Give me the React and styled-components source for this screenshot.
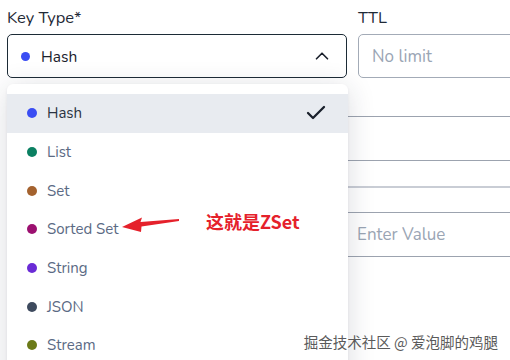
import React from 'react';
import styled, { createGlobalStyle } from 'styled-components';
import { Check, ChevronUp } from 'lucide-react';

const Global = createGlobalStyle`
  html, body { margin: 0; padding: 0; background: #fff; }
  body { font-family: Nunito, Lato, "Noto Sans", sans-serif; }
`;

const Page = styled.div`
  position: relative;
  width: 510px;
  height: 360px;
  overflow: hidden;
  box-sizing: border-box;
  padding: 8px 0 0 7px;
`;

const TopRow = styled.div`
  display: grid;
  grid-template-columns: 340px 220px;
  column-gap: 11px;
  width: 571px;
`;

const Field = styled.div`
  position: relative;
  display: flex;
  flex-direction: column;
  gap: 6px;
`;

const Label = styled.label`
  font-size: 16.5px;
  line-height: 20px;
  color: #1f2a37;
`;

const SelectBox = styled.div`
  height: 44px;
  box-sizing: border-box;
  border: 1px solid ${p => (p.$active ? '#1c2b36' : '#a3abb7')};
  border-radius: 5px;
  display: flex;
  align-items: center;
  padding: 0 13px;
  gap: 11px;
  font-size: ${p => (p.$placeholder ? '17px' : '15.5px')};
  color: ${p => (p.$placeholder ? '#9aa5b4' : '#1a202c')};
`;

const EndIcon = styled.span`
  margin-left: auto;
  display: flex;
  align-items: center;
`;

const Dot = styled.span`
  width: ${p => p.$size || 9}px;
  height: ${p => p.$size || 9}px;
  border-radius: 50%;
  background: ${p => p.$color};
  flex: none;
`;

const Menu = styled.ul`
  position: absolute;
  top: calc(100% + 6px);
  left: 0;
  width: 341px;
  height: 320px;
  margin: 0;
  padding: 10px 0 0;
  list-style: none;
  background: #fff;
  border-radius: 6px;
  box-shadow: 0 4px 28px rgba(30, 40, 60, 0.16), 0 1px 3px rgba(30, 40, 60, 0.06);
  z-index: 5;
`;

const Item = styled.li`
  height: 38.67px;
  display: flex;
  align-items: center;
  gap: 10px;
  padding: 0 20px 0 20px;
  font-size: 15px;
  background: ${p => (p.$selected ? '#e8ebf0' : 'transparent')};
  color: ${p => (p.$selected ? '#2a3342' : '#5b6a84')};
`;

const BackRows = styled.div`
  display: grid;
  grid-template-columns: 328px 220px;
  column-gap: 8px;
  margin-top: 38px;
  width: 556px;
`;

const Stack = styled.div`
  display: flex;
  flex-direction: column;
`;

const Box = styled.div`
  height: 45px;
  box-sizing: border-box;
  border: 1px solid #9ca3af;
  border-radius: 4px;
  display: flex;
  align-items: center;
  padding: 0 13px;
  font-size: 17px;
  color: #9aa5b4;
  margin-top: ${p => p.$gap || 0}px;
`;

const Divider = styled.div`
  height: 2px;
  background: #c9cdd5;
  margin-top: 25px;
`;

const Annotation = styled.div`
  position: absolute;
  left: 121px;
  top: 208px;
  display: flex;
  align-items: flex-start;
  gap: 25px;
  z-index: 6;
`;

const Arrow = styled.svg`
  margin-top: 6px;
  flex: none;
`;

const Note = styled.span`
  font-family: "Noto Sans CJK SC", sans-serif;
  font-weight: 700;
  font-size: 18px;
  line-height: 24px;
  color: #e5212b;
  margin-top: 1px;
`;

const Watermark = styled.div`
  position: absolute;
  right: 12px;
  bottom: 8px;
  font-family: "Noto Sans CJK SC", sans-serif;
  font-size: 14.5px;
  line-height: 20px;
  color: #5a5a5a;
  text-shadow: 0 0 2px #fff, 0 0 2px #fff;
  z-index: 7;
`;

const types = [
  { name: 'Hash', color: '#3a4df3' },
  { name: 'List', color: '#0b8062' },
  { name: 'Set', color: '#a4622e' },
  { name: 'Sorted Set', color: '#9c1070' },
  { name: 'String', color: '#6a2bd6' },
  { name: 'JSON', color: '#3e4a5e' },
  { name: 'Stream', color: '#6b7a18' },
];

export default function App() {
  return (
    <>
      <Global />
      <Page>
        <TopRow>
          <Field>
            <Label>Key Type*</Label>
            <SelectBox $active>
              <Dot $color="#3a4df3" />
              <span>Hash</span>
              <EndIcon>
                <ChevronUp size={22} strokeWidth={1.8} color="#1a202c" />
              </EndIcon>
            </SelectBox>
            <Menu>
              {types.map((t, i) => (
                <Item key={t.name} $selected={i === 0}>
                  <Dot $color={t.color} $size={10} />
                  <span>{t.name}</span>
                  {i === 0 && (
                    <EndIcon>
                      <Check size={24} strokeWidth={2.3} color="#1a202c" />
                    </EndIcon>
                  )}
                </Item>
              ))}
            </Menu>
          </Field>
          <Field>
            <Label>TTL</Label>
            <SelectBox $placeholder>No limit</SelectBox>
          </Field>
        </TopRow>
        <BackRows>
          {[0, 1].map(c => (
            <Stack key={c}>
              <Box />
              <Divider />
              <Box $gap={24}>{c === 1 ? 'Enter Value' : null}</Box>
            </Stack>
          ))}
        </BackRows>
        <Annotation>
          <Arrow width="60" height="20" viewBox="0 0 60 20">
            <polygon points="1,13 21,3.5 19.5,8 58,5 58,7 20.5,12.5 20,18" fill="#e5212b" />
          </Arrow>
          <Note>这就是ZSet</Note>
        </Annotation>
        <Watermark>掘金技术社区 @ 爱泡脚的鸡腿</Watermark>
      </Page>
    </>
  );
}
